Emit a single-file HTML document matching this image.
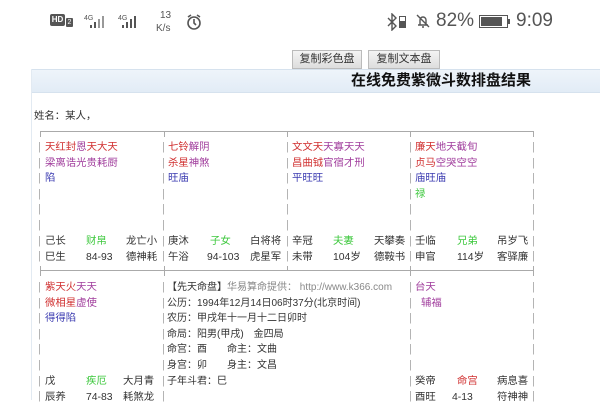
<!DOCTYPE html>
<html><head><meta charset="utf-8"><style>
*{margin:0;padding:0;box-sizing:border-box}
body{width:600px;height:400px;overflow:hidden;background:#fff;position:relative;font-family:"Liberation Sans","Noto Sans CJK SC",sans-serif;color:#333}
.t{position:absolute;font-size:10.4px;line-height:13px;white-space:nowrap}
.b{position:absolute;font-size:11px;line-height:13px;color:#aaa}
.r{color:#d03030}.p{color:#a03c9c}.bl{color:#3a3ab0}.g{color:#3ec83e}.gr{color:#888}
.hl{position:absolute;height:1px;background:#aaa}
.vl{position:absolute;width:1px;background:#aaa}
.btn{position:absolute;top:50px;height:19px;border:1px solid #bbb;background:linear-gradient(#f4f4f4,#ddd);font-size:11px;line-height:17px;text-align:center;color:#333;font-family:"Liberation Sans","Noto Sans CJK SC",sans-serif}
</style></head><body>
<!-- status bar -->
<div style="position:absolute;left:50px;top:14px;width:15px;height:12px;background:#555;border-radius:2px;color:#fff;font-size:8px;font-weight:bold;line-height:12px;text-align:center">HD</div>
<div style="position:absolute;left:66px;top:18px;width:7px;height:9px;background:#555;border-radius:1px;color:#fff;font-size:7px;line-height:9px;text-align:center">2</div>
<div class="t" style="left:84px;top:12px;font-size:7px;color:#555">4G</div>
<svg style="position:absolute;left:86px;top:14px" width="24" height="16"><rect x="4" y="11" width="2" height="3" fill="#555"/><rect x="8" y="8" width="2" height="6" fill="#555"/><rect x="12" y="5" width="2" height="9" fill="#999"/><rect x="16" y="2" width="2" height="12" fill="#999"/></svg>
<div class="t" style="left:118px;top:12px;font-size:7px;color:#555">4G</div>
<svg style="position:absolute;left:118px;top:14px" width="24" height="16"><rect x="4" y="11" width="2" height="3" fill="#555"/><rect x="8" y="8" width="2" height="6" fill="#555"/><rect x="12" y="5" width="2" height="9" fill="#555"/><rect x="16" y="2" width="2" height="12" fill="#555"/></svg>
<div class="t" style="left:160px;top:9px;font-size:10px;color:#555">13</div>
<div class="t" style="left:156px;top:22px;font-size:10px;color:#555">K/s</div>
<svg style="position:absolute;left:185px;top:13px" width="18" height="18"><circle cx="9" cy="10" r="6" fill="none" stroke="#555" stroke-width="1.6"/><path d="M9 6v4l2 2M3 4l3-2M15 4l-3-2" stroke="#555" stroke-width="1.6" fill="none"/></svg>
<svg style="position:absolute;left:386px;top:13px" width="12" height="18"><path d="M2 5l8 8-4 4V1l4 4-8 8" stroke="#555" stroke-width="1.4" fill="none"/></svg>
<div style="position:absolute;left:399px;top:16px;width:7px;height:12px;border:1px solid #555;background:linear-gradient(#fff 40%,#555 40%)"></div>
<svg style="position:absolute;left:414px;top:12px" width="18" height="18"><path d="M4 13h10M6 13V8a3 3 0 0 1 6 0v5M8 15h2M3 3l12 12" stroke="#555" stroke-width="1.4" fill="none"/></svg>
<div class="t" style="left:436px;top:10px;font-size:19px;line-height:22px;color:#555">82%</div>
<div style="position:absolute;left:479px;top:15px;width:29px;height:13px;border:1px solid #555;padding:1px"><div style="width:21px;height:9px;background:#555"></div></div>
<div style="position:absolute;left:508px;top:19px;width:2px;height:5px;background:#555"></div>
<div class="t" style="left:516px;top:10px;font-size:19px;line-height:22px;color:#555">9:09</div>

<div class="btn" style="left:292px;width:70px">复制彩色盘</div>
<div class="btn" style="left:368px;width:72px">复制文本盘</div>
<div style="position:absolute;left:31px;top:69px;width:569px;height:24px;background:linear-gradient(#eef4fa,#e2ecf6);border-top:1px solid #d6e2ee;border-bottom:1px solid #d6e2ee"></div>
<div class="vl" style="left:31px;top:69px;height:331px;background:#e2eaf2"></div>
<div class="t" style="left:351px;top:72px;font-size:15px;line-height:18px;font-weight:bold;color:#111">在线免费紫微斗数排盘结果</div>
<div class="t" style="left:34px;top:110px">姓名：某人，</div>

<div class="hl" style="left:40px;top:131px;width:494px"></div>
<div class="hl" style="left:40px;top:270px;width:494px"></div>
<div class="vl" style="left:40px;top:131px;height:6px"></div>
<div class="vl" style="left:164px;top:131px;height:6px"></div>
<div class="vl" style="left:287px;top:131px;height:6px"></div>
<div class="vl" style="left:410px;top:131px;height:6px"></div>
<div class="vl" style="left:533px;top:131px;height:6px"></div>
<div class="vl" style="left:40px;top:266px;height:10px"></div>
<div class="vl" style="left:164px;top:266px;height:10px"></div>
<div class="vl" style="left:287px;top:266px;height:5px"></div>
<div class="vl" style="left:410px;top:266px;height:10px"></div>
<div class="vl" style="left:533px;top:266px;height:10px"></div>

<!-- bars -->
<div class="b" style="left:38px;top:140px;line-height:15.6px">|<br>|<br>|<br>|<br>|<br>|<br>|<br>|</div>
<div class="b" style="left:162px;top:140px;line-height:15.6px">|<br>|<br>|<br>|<br>|<br>|<br>|<br>|</div>
<div class="b" style="left:286px;top:140px;line-height:15.6px">|<br>|<br>|<br>|<br>|<br>|<br>|<br>|</div>
<div class="b" style="left:409px;top:140px;line-height:15.6px">|<br>|<br>|<br>|<br>|<br>|<br>|<br>|</div>
<div class="b" style="left:532px;top:140px;line-height:15.6px">|<br>|<br>|<br>|<br>|<br>|<br>|<br>|</div>
<div class="b" style="left:38px;top:280px;line-height:15.6px">|<br>|<br>|<br>|<br>|<br>|<br>|<br>|</div>
<div class="b" style="left:162px;top:280px;line-height:15.6px">|<br>|<br>|<br>|<br>|<br>|<br>|<br>|</div>
<div class="b" style="left:409px;top:280px;line-height:15.6px">|<br>|<br>|<br>|<br>|<br>|<br>|<br>|</div>
<div class="b" style="left:532px;top:280px;line-height:15.6px">|<br>|<br>|<br>|<br>|<br>|<br>|<br>|</div>

<!-- top cells -->
<div class="t" style="left:45px;top:140px;line-height:15.6px"><span class="r">天红封</span><span class="p">恩</span><span class="r">天大天</span><br><span class="p">梁离诰光贵耗厨</span><br><span class="bl">陷</span></div>
<div class="t" style="left:168px;top:140px;line-height:15.6px"><span class="r">七铃</span><span class="p">解阴</span><br><span class="r">杀星</span><span class="p">神煞</span><br><span class="bl">旺庙</span></div>
<div class="t" style="left:292px;top:140px;line-height:15.6px"><span class="r">文文天</span><span class="p">天寡天天</span><br><span class="r">昌曲钺</span><span class="p">官宿才刑</span><br><span class="bl">平旺旺</span></div>
<div class="t" style="left:415px;top:140px;line-height:15.6px"><span class="r">廉天</span><span class="p">地天截旬</span><br><span class="r">贞马</span><span class="p">空哭空空</span><br><span class="bl">庙旺庙</span><br><span class="g">禄</span></div>

<div class="t" style="left:45px;top:234px;line-height:15.6px">己长<br>巳生</div>
<div class="t" style="left:86px;top:234px;line-height:15.6px"><span class="g">财帛</span><br>84-93</div>
<div class="t" style="left:126px;top:234px;line-height:15.6px">龙亡小<br>德神耗</div>
<div class="t" style="left:168px;top:234px;line-height:15.6px">庚沐<br>午浴</div>
<div class="t" style="left:210px;top:234px;line-height:15.6px"><span class="g">子女</span><br><span style="margin-left:-3px">94-103</span></div>
<div class="t" style="left:250px;top:234px;line-height:15.6px">白将将<br>虎星军</div>
<div class="t" style="left:292px;top:234px;line-height:15.6px">辛冠<br>未带</div>
<div class="t" style="left:333px;top:234px;line-height:15.6px"><span class="g">夫妻</span><br>104岁</div>
<div class="t" style="left:374px;top:234px;line-height:15.6px">天攀奏<br>德鞍书</div>
<div class="t" style="left:415px;top:234px;line-height:15.6px">壬临<br>申官</div>
<div class="t" style="left:457px;top:234px;line-height:15.6px"><span class="g">兄弟</span><br>114岁</div>
<div class="t" style="left:497px;top:234px;line-height:15.6px">吊岁飞<br>客驿廉</div>

<!-- lower cells -->
<div class="t" style="left:45px;top:280px;line-height:15.6px"><span class="r">紫天火</span><span class="p">天天</span><br><span class="r">微相星</span><span class="p">虚使</span><br><span class="bl">得得陷</span></div>
<div class="t" style="left:167px;top:280px;line-height:15.6px;font-size:10px">【先天命盘】<span class="gr">华易算命提供： http://www.k366.com</span><br>公历：1994年12月14日06时37分(北京时间)<br>农历：甲戌年十一月十二日卯时<br>命局：阳男(甲戌)　金四局<br>命宫：酉　　命主：文曲<br>身宫：卯　　身主：文昌<br>子年斗君：巳</div>
<div class="t" style="left:415px;top:280px;line-height:15.6px"><span class="p">台天</span><br><span class="p" style="margin-left:6px">辅福</span></div>
<div class="t" style="left:45px;top:374px;line-height:15.6px">戊<br>辰养</div>
<div class="t" style="left:86px;top:374px;line-height:15.6px"><span class="g">疾厄</span><br>74-83</div>
<div class="t" style="left:123px;top:374px;line-height:15.6px">大月青<br>耗煞龙</div>
<div class="t" style="left:415px;top:374px;line-height:15.6px">癸帝<br>酉旺</div>
<div class="t" style="left:457px;top:374px;line-height:15.6px"><span class="r">命宫</span><br><span style="margin-left:-5px">4-13</span></div>
<div class="t" style="left:497px;top:374px;line-height:15.6px">病息喜<br>符神神</div>
</body></html>
